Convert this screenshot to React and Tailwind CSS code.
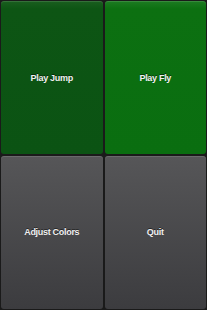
import React from 'react';

const Tile = ({ label, className }) => (
  <button
    className={`flex items-center justify-center rounded-[3px] text-[9px] font-bold tracking-[-0.3px] text-[#f0f0f0] [text-shadow:0_-1px_0_rgba(0,0,0,0.5)] shadow-[inset_0_1px_0_rgba(255,255,255,0.12)] ${className}`}
    style={{ fontFamily: '"Liberation Sans", Arial, sans-serif' }}
  >
    {label}
  </button>
);

export default function App() {
  return (
    <div className="w-[207px] h-[310px] bg-[#1a1a1a] p-[1px] grid grid-cols-2 grid-rows-2 gap-[2px]">
      <Tile label="Play Jump" className="pt-[2px] bg-[linear-gradient(to_bottom,#1a5e1f_0px,#0d5514_8px,#0b5313_100%)]" />
      <Tile label="Play Fly" className="pt-[2px] bg-[linear-gradient(to_bottom,#1d7b22_0px,#0c7011_8px,#0a6e10_100%)]" />
      <Tile label="Adjust Colors" className="bg-[linear-gradient(to_bottom,#565658_0%,#3c3c3f_100%)]" />
      <Tile label="Quit" className="bg-[linear-gradient(to_bottom,#565658_0%,#3c3c3f_100%)]" />
    </div>
  );
}
